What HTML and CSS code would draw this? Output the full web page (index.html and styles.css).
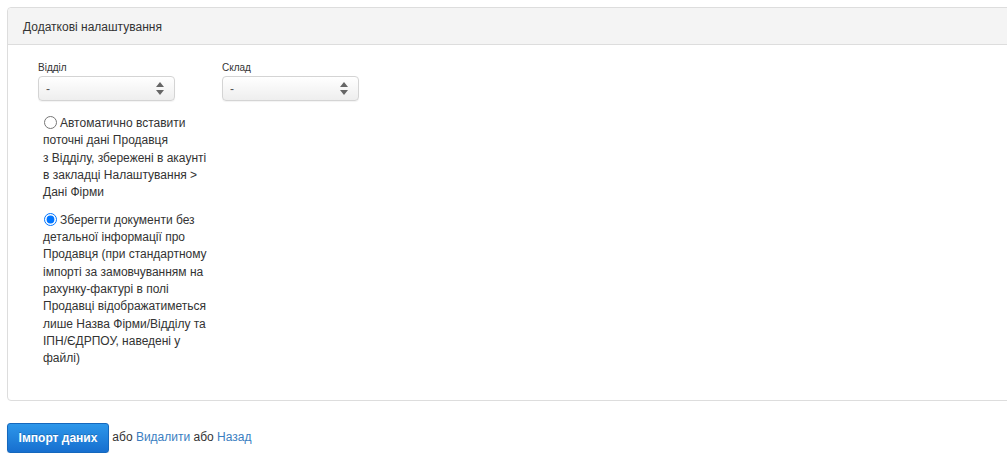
FILE: index.html
```html
<!DOCTYPE html>
<html lang="uk">
<head>
<meta charset="utf-8">
<link rel="stylesheet" href="styles.css">
</head>
<body>
<div class="page">
  <div class="panel">
    <div class="panel-head">Додаткові налаштування</div>
    <div class="panel-body">
      <div class="fields">
        <div class="field">
          <label class="field-label">Відділ</label>
          <div class="select-wrap">
            <select class="select"><option>-</option></select>
            <svg class="arrows" width="8" height="13" viewBox="0 0 8 13"><path d="M4 0 L8 5 L0 5 Z M0 8 L8 8 L4 13 Z" fill="#666"/></svg>
          </div>
        </div>
        <div class="field">
          <label class="field-label">Склад</label>
          <div class="select-wrap">
            <select class="select"><option>-</option></select>
            <svg class="arrows" width="8" height="13" viewBox="0 0 8 13"><path d="M4 0 L8 5 L0 5 Z M0 8 L8 8 L4 13 Z" fill="#666"/></svg>
          </div>
        </div>
      </div>
      <div class="options">
        <label class="option"><input type="radio" name="mode" class="radio">Автоматично вставити поточні дані Продавця<br>з Відділу, збережені в акаунті в закладці Налаштування &gt; Дані Фірми</label>
        <label class="option"><input type="radio" name="mode" class="radio" checked>Зберегти документи без детальної інформації про Продавця (при стандартному імпорті за замовчуванням на рахунку-фактурі в полі Продавці відображатиметься лише Назва Фірми/Відділу та ІПН/ЄДРПОУ, наведені у файлі)</label>
      </div>
    </div>
  </div>
  <div class="actions">
    <button class="btn">Імпорт даних</button> або <a class="link" href="#">Видалити</a> або <a class="link" href="#">Назад</a>
  </div>
</div>
</body>
</html>
```
FILE: styles.css
```css
html, body {
  margin: 0;
  padding: 0;
  background: #fff;
  font-family: "Liberation Sans", Arial, sans-serif;
  color: #333;
  overflow: hidden;
}
.page {
  padding: 7px 0 0 7px;
}
.panel {
  width: 1040px;
  border: 1px solid #ddd;
  border-radius: 4px;
  box-sizing: border-box;
  height: 394px;
}
.panel-head {
  background: #f4f4f4;
  border-bottom: 1px solid #ddd;
  border-radius: 4px 4px 0 0;
  height: 37px;
  box-sizing: border-box;
  padding: 11px 15px 0;
  font-size: 12px;
  line-height: 16px;
}
.panel-body {
  padding: 16px 0 0 30px;
}
.fields {
  display: flex;
  gap: 47px;
}
.field {
  display: flex;
  flex-direction: column;
}
.field-label {
  font-size: 10px;
  line-height: 13px;
  margin-bottom: 2px;
}
.select-wrap {
  position: relative;
  width: 137px;
  height: 25px;
}
.select {
  appearance: none;
  -webkit-appearance: none;
  width: 137px;
  height: 25px;
  border: 1px solid #d4d4d4;
  border-radius: 4px;
  background: linear-gradient(#ffffff, #eeeeee);
  box-shadow: 0 1px 1px rgba(0,0,0,0.05);
  padding: 0 0 0 7px;
  font-family: "Liberation Sans", Arial, sans-serif;
  font-size: 12px;
  color: #555;
  margin: 0;
  outline: none;
}
.arrows {
  position: absolute;
  right: 11px;
  top: 6px;
  pointer-events: none;
}
.options {
  width: 170px;
  margin: 14px 0 0 5px;
  display: flex;
  flex-direction: column;
  gap: 10px;
}
.option {
  display: block;
  font-size: 12px;
  line-height: 17.33px;
}
.radio {
  width: 13px;
  height: 13px;
  margin: 0 3px 0 1px;
  vertical-align: -2px;
}
.actions {
  margin-top: 21px;
  font-size: 12px;
  line-height: 30px;
}
.btn {
  width: 102px;
  height: 30px;
  border: 1px solid #1568bd;
  border-radius: 3px;
  background: linear-gradient(#2d97ea, #176fcf);
  color: #fff;
  font-family: "Liberation Sans", Arial, sans-serif;
  font-size: 12px;
  font-weight: bold;
  padding: 0;
  vertical-align: middle;
  text-shadow: 0 -1px 0 rgba(0,0,0,0.2);
  box-shadow: 0 1px 1px rgba(0,0,0,0.15);
}
.link {
  color: #3a7ec1;
  text-decoration: none;
}
```
